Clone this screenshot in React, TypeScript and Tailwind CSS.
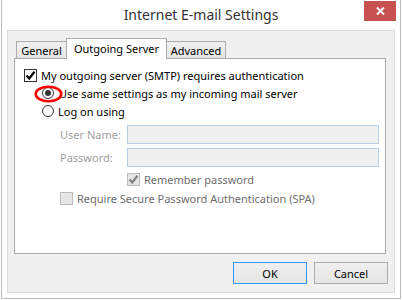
import React from 'react';

const Check = ({ color }: { color: string }) => (
  <svg width="11" height="11" viewBox="0 0 11 11" className="block">
    <path d="M1.5 5.5 L4.2 8.5 L9.5 1.8" fill="none" stroke={color} strokeWidth="2.2" />
  </svg>
);

const CheckBox = ({ checked, disabled }: { checked: boolean; disabled?: boolean }) => (
  <div
    className={`w-[13px] h-[13px] shrink-0 border flex items-center justify-center ${
      disabled ? 'border-[#bcbcbc] bg-[#e6e6e6]' : 'border-[#333333] bg-white'
    }`}
  >
    {checked && <Check color={disabled ? '#838383' : '#000000'} />}
  </div>
);

const Radio = ({ checked }: { checked: boolean }) => (
  <div className="w-[12px] h-[12px] shrink-0 rounded-full border border-[#333333] bg-white flex items-center justify-center">
    {checked && <div className="w-[6px] h-[6px] rounded-full bg-[#333333]" />}
  </div>
);

export default function App() {
  return (
    <div className="w-[402px] h-[300px] bg-white overflow-hidden font-['Segoe_UI','Noto_Sans',sans-serif] text-[11px] leading-[15px] text-black">
      <div className="ml-px w-[400px] h-[299px] border-x border-b border-[#bdbdbd] bg-white">
        {/* Title bar */}
        <div className="relative h-[30px] flex items-center justify-center">
          <span className="text-[14px] leading-[18px] text-[#333333] pb-[1px]">Internet E-mail Settings</span>
          <div className="absolute right-[4px] top-[1px] w-[32px] h-[20px] bg-[#c75050] flex items-center justify-center">
            <svg width="9" height="8" viewBox="0 0 9 8">
              <path d="M1 0.5 L8 7.5 M8 0.5 L1 7.5" stroke="#ffffff" strokeWidth="2" />
            </svg>
          </div>
        </div>

        {/* Client area */}
        <div className="ml-[5px] w-[388px] h-[263px] border border-[#dadada] bg-[#f0f0f0] pt-[7px] pl-[6px]">
          {/* Tabs */}
          <div className="relative z-10 flex items-end h-[20px] ml-[2px]">
            <div className="w-[51px] h-[17px] border border-b-0 border-[#acacac] bg-gradient-to-b from-[#f0f0f0] to-[#e5e5e5] flex items-center justify-center">
              General
            </div>
            <div className="-ml-px w-[101px] h-[21px] -mb-px border border-b-0 border-[#acacac] bg-white flex items-center justify-center pb-[2px]">
              Outgoing Server
            </div>
            <div className="-ml-px w-[60px] h-[17px] border border-b-0 border-[#acacac] bg-gradient-to-b from-[#f0f0f0] to-[#e5e5e5] flex items-center justify-center">
              Advanced
            </div>
          </div>

          {/* Tab page */}
          <div className="relative w-[372px] h-[196px] border border-[#acacac] bg-white pt-[7px]">
            <div className="flex items-center h-[18px] pl-[9px] gap-[4px]">
              <CheckBox checked />
              <span>My outgoing server (SMTP) requires authentication</span>
            </div>
            <div className="flex items-center h-[18px] pl-[27px] gap-[5px]">
              <Radio checked />
              <span>Use same settings as my incoming mail server</span>
            </div>
            <div className="flex items-center h-[18px] pl-[27px] gap-[4px]">
              <Radio checked={false} />
              <span>Log on using</span>
            </div>
            <div className="flex items-center mt-[5px] pl-[45px]">
              <span className="w-[67px] text-[#a0a0a0]">User Name:</span>
              <div className="w-[252px] h-[19px] border border-[#b9cde3] bg-[#f0f0f0]" />
            </div>
            <div className="flex items-center mt-[4px] pl-[45px]">
              <span className="w-[67px] text-[#a0a0a0]">Password:</span>
              <div className="w-[252px] h-[19px] border border-[#b9cde3] bg-[#f0f0f0]" />
            </div>
            <div className="flex items-center h-[18px] mt-[3px] pl-[112px] gap-[4px]">
              <CheckBox checked disabled />
              <span className="text-[#6d6d6d]">Remember password</span>
            </div>
            <div className="flex items-center h-[18px] mt-[1px] pl-[45px] gap-[4px]">
              <CheckBox checked={false} disabled />
              <span className="text-[#6d6d6d]">Require Secure Password Authentication (SPA)</span>
            </div>

            {/* annotation ring */}
            <svg className="absolute left-[19px] top-[26px]" width="30" height="18" viewBox="0 0 30 18">
              <ellipse cx="14.5" cy="9" rx="12.8" ry="7.2" fill="none" stroke="#ff0000" strokeWidth="2.6" />
            </svg>
          </div>

          {/* Buttons */}
          <div className="flex justify-end gap-[7px] pr-[6px] mt-[8px]">
            <button className="w-[74px] h-[22px] border border-[#3399ff] bg-gradient-to-b from-[#f0f0f0] to-[#e5e5e5]">
              OK
            </button>
            <button className="w-[74px] h-[22px] border border-[#acacac] bg-gradient-to-b from-[#f0f0f0] to-[#e5e5e5]">
              Cancel
            </button>
          </div>
        </div>
      </div>
    </div>
  );
}
